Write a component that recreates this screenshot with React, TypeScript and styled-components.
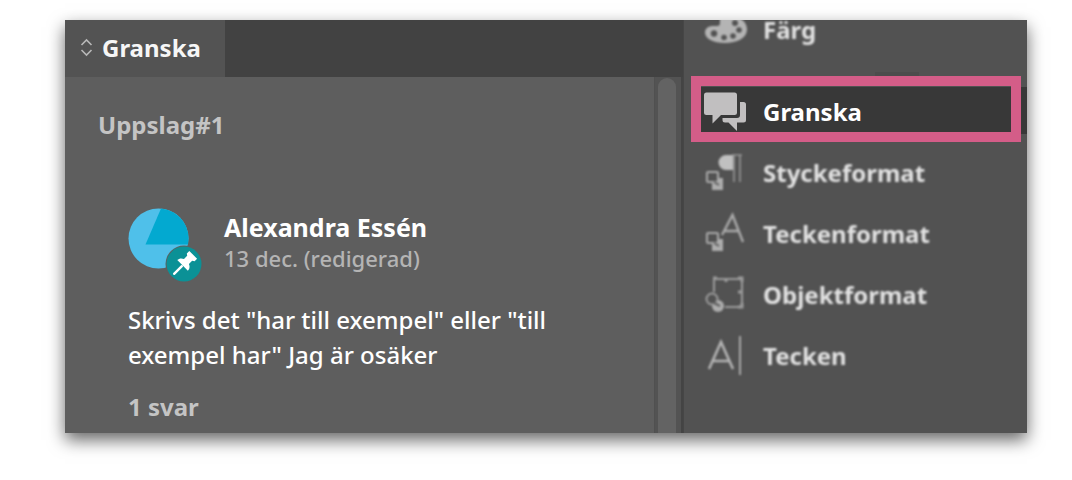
import React from "react";
import styled, { createGlobalStyle, css } from "styled-components";

const GlobalStyle = createGlobalStyle`
  * { box-sizing: border-box; }
  body {
    margin: 0;
    background: #fff;
    font-family: "Noto Sans", "Open Sans", sans-serif;
    font-size: 24px;
  }
`;

const Page = styled.main`
  padding: 20px 45px 47px 65px;
`;

const Workspace = styled.div`
  display: grid;
  grid-template-columns: minmax(0, 1fr) 344px;
  box-shadow: 0 7px 16px rgba(0, 0, 0, 0.6);
`;

const ReviewPanel = styled.section`
  display: flex;
  flex-direction: column;
  background: #5e5e5e;
`;

const TabBar = styled.div`
  display: flex;
  height: 57px;
  background: #424242;
`;

const Tab = styled.button`
  display: flex;
  align-items: center;
  gap: 9px;
  width: 160px;
  padding: 0 0 2px 15px;
  border: 0;
  background: #535353;
  color: #f6f6f6;
  font: inherit;
  font-weight: 700;
`;

const PanelBody = styled.div`
  display: flex;
  flex: 1;
`;

const Comments = styled.div`
  flex: 1;
  min-width: 0;
  padding: 33px 33px 11px;
`;

const ScrollTrack = styled.div`
  width: 29px;
  padding: 1px 5px 0 3px;
  border-left: 1px solid #505050;
  border-right: 2px solid #444;
  background: #535353;
`;

const ScrollThumb = styled.div`
  height: 100%;
  border-radius: 9px 9px 0 0;
  background: #636363;
`;

const SpreadTitle = styled.h2`
  margin: 0 0 68px;
  color: #c4c4c4;
  font-size: 24px;
  font-weight: 700;
  line-height: 30px;
`;

const Comment = styled.article`
  padding-left: 30px;
`;

const CommentHeader = styled.header`
  display: flex;
  gap: 21px;
  margin-bottom: 19px;
`;

const Author = styled.div`
  padding-top: 4px;
  line-height: 31px;
`;

const AuthorName = styled.div`
  color: #fff;
  font-size: 25px;
  font-weight: 700;
`;

const CommentDate = styled.div`
  color: #b4b4b4;
  font-size: 22px;
  font-weight: 500;
`;

const CommentText = styled.p`
  max-width: 460px;
  margin: 0 0 20px;
  color: #fff;
  font-weight: 500;
  line-height: 35px;
`;

const Replies = styled.button`
  display: block;
  padding: 0;
  border: 0;
  background: none;
  color: #c4c4c4;
  font: inherit;
  font-weight: 700;
  line-height: 30px;
`;

const Dock = styled.nav`
  overflow: hidden;
  border-left: 1px solid #464646;
  background: #525252;
`;

const DockList = styled.ul`
  margin: -21px 0 0;
  padding: 0;
  list-style: none;
`;

const DockDivider = styled.li`
  display: flex;
  align-items: flex-end;
  justify-content: center;
  height: 21px;
  padding: 0 0 5px 82px;

  &::before {
    content: "";
    width: 44px;
    height: 4px;
    background: #4c4c4c;
  }
`;

const DockButton = styled.button<{ $active?: boolean }>`
  position: relative;
  z-index: 0;
  display: flex;
  align-items: center;
  gap: 17px;
  width: 100%;
  height: 61px;
  padding: 0 0 0 20px;
  border: 0;
  background: none;
  color: #e2e2e2;
  font: inherit;
  font-weight: 700;
  line-height: 18px;
  text-align: left;

  ${({ $active }) =>
    $active
      ? css`
          color: #fff;
          &::before {
            content: "";
            position: absolute;
            inset: 6px 0 8px 7px;
            z-index: -1;
            background: #383838;
          }
          &::after {
            content: "";
            position: absolute;
            inset: -5px 6px 0 7px;
            border: 10px solid #d45d88;
          }
        `
      : css`
          & > * {
            filter: blur(1px);
          }
        `}
`;

const DockIcon = styled.svg`
  flex: none;
  width: 42px;
  height: 42px;
  overflow: visible;
`;

const AvatarArt = styled.svg`
  flex: none;
  width: 75px;
  height: 75px;
`;

const SortArrows = () => (
  <svg width="13" height="19" viewBox="0 0 13 19" fill="none" stroke="#b8b8b8" strokeWidth="1.6" aria-hidden="true">
    <path d="M1.5 7 6.5 2l5 5M1.5 12l5 5 5-5" />
  </svg>
);

const Avatar = () => (
  <AvatarArt viewBox="0 0 75 75" aria-hidden="true">
    <circle cx="30.5" cy="30.5" r="30" fill="#4fc0ea" />
    <path d="M17.5 36.5 33 .6A30 30 0 0 1 60 36.5Z" fill="#03a9d0" />
    <circle cx="56" cy="56" r="18.5" fill="#5e5e5e" />
    <circle cx="56" cy="56" r="17.5" fill="#0b9196" />
    <g transform="translate(56 56) rotate(45)" fill="#fff">
      <path d="M-5.500-13h11v3.500L3.500-8v4.500C6-2.500 7.500-.5 7.500 2h-15c0-2.500 1.500-4.500 4-5.500V-8l-2-1.500Z" />
      <rect x="-1.200" y="2" width="2.400" height="13" rx="1" />
    </g>
  </AvatarArt>
);

const PaletteIcon = () => (
  <DockIcon viewBox="0 0 42 42" fill="#b4b4b4" aria-hidden="true">
    <path d="M22 6c12 0 21 6 21 14.500S33 34 21 34 1 29.500 1 23.500c0-4.500 4-6.500 8-6.500 4.500 0 7 .5 7-3 0-4-1-8 6-8Z" />
    <g fill="#525252">
      <circle cx="31" cy="14" r="3" />
      <circle cx="35" cy="21" r="2.800" />
      <circle cx="29" cy="27" r="2.800" />
      <circle cx="20" cy="28.500" r="2.800" />
      <circle cx="10" cy="24.500" r="3.200" />
    </g>
  </DockIcon>
);

const ReviewIcon = () => (
  <DockIcon viewBox="0 0 42 42" fill="#c1bfc0" aria-hidden="true">
    <path d="M36 11h3.500a2.500 2.500 0 0 1 2.500 2.500V29a2.500 2.500 0 0 1-2.500 2.500H33V40l-8.500-8.500H21a2.500 2.500 0 0 1-2.500-2.500v-2H33a3 3 0 0 0 3-3Z" />
    <path d="M2.500 1.500h28A2.500 2.500 0 0 1 33 4v17.500a2.500 2.500 0 0 1-2.500 2.500H17l-8.500 8.500V24h-6A2.500 2.500 0 0 1 0 21.500V4a2.500 2.500 0 0 1 2.500-2.500Z" />
  </DockIcon>
);

const StyleBadge = () => (
  <>
    <path d="M8 26h11v12H8Z" fill="#adadad" stroke="none" />
    <rect x="3" y="20" width="11" height="10" rx="1" fill="#525252" />
    <path d="m10 30 5 3" stroke="#5c5c5c" strokeWidth="2" />
  </>
);

const ParagraphStyleIcon = () => (
  <DockIcon viewBox="0 0 42 42" fill="none" stroke="#aaa" strokeWidth="2" aria-hidden="true">
    <path d="M28 4h-6a6 6 0 0 0 0 13h6Z" fill="#c0c0c0" stroke="#c0c0c0" />
    <path d="M28 3h10M30 3v27M36 3v27" strokeWidth="1.600" stroke="#989898" />
    <StyleBadge />
  </DockIcon>
);

const CharacterStyleIcon = () => (
  <DockIcon viewBox="0 0 42 42" fill="none" stroke="#aaa" strokeWidth="2" aria-hidden="true">
    <path d="m18 22 10.500-20L39 29M21 18h14" strokeWidth="2.400" />
    <StyleBadge />
  </DockIcon>
);

const ObjectStyleIcon = () => (
  <DockIcon viewBox="0 0 42 42" fill="none" stroke="#9c9c9c" strokeWidth="2" aria-hidden="true">
    <path d="M10 18V5h28v28H21" />
    <path d="M9 4h4M22 4v4M34 4h4v4M38 18h-4M38 29v4h-4" strokeWidth="3" />
    <circle cx="14" cy="32" r="6" fill="#adadad" stroke="none" />
    <circle cx="8" cy="25" r="5.500" fill="#525252" />
    <path d="m10 29 6 3" stroke="#5c5c5c" />
  </DockIcon>
);

const CharacterIcon = () => (
  <DockIcon viewBox="0 0 42 42" fill="none" stroke="#b4b4b4" aria-hidden="true">
    <path d="M5 34 17 7l12 27M9 26h16" strokeWidth="2.600" />
    <path d="M36 1v39" strokeWidth="1.800" />
  </DockIcon>
);

const stylePanels = [
  { label: "Styckeformat", Icon: ParagraphStyleIcon },
  { label: "Teckenformat", Icon: CharacterStyleIcon },
  { label: "Objektformat", Icon: ObjectStyleIcon },
  { label: "Tecken", Icon: CharacterIcon },
];

export default function App() {
  return (
    <>
      <GlobalStyle />
      <Page>
        <Workspace>
          <ReviewPanel>
            <TabBar>
              <Tab type="button">
                <SortArrows />
                <span>Granska</span>
              </Tab>
            </TabBar>
            <PanelBody>
              <Comments>
                <SpreadTitle>Uppslag#1</SpreadTitle>
                <Comment>
                  <CommentHeader>
                    <Avatar />
                    <Author>
                      <AuthorName>Alexandra Essén</AuthorName>
                      <CommentDate>13 dec. (redigerad)</CommentDate>
                    </Author>
                  </CommentHeader>
                  <CommentText>
                    Skrivs det "har till exempel" eller "till exempel har" Jag är osäker
                  </CommentText>
                  <Replies type="button">1 svar</Replies>
                </Comment>
              </Comments>
              <ScrollTrack>
                <ScrollThumb />
              </ScrollTrack>
            </PanelBody>
          </ReviewPanel>
          <Dock>
            <DockList>
              <li>
                <DockButton type="button">
                  <PaletteIcon />
                  <span>Färg</span>
                </DockButton>
              </li>
              <DockDivider />
              <li>
                <DockButton type="button" $active>
                  <ReviewIcon />
                  <span>Granska</span>
                </DockButton>
              </li>
              {stylePanels.map(({ label, Icon }) => (
                <li key={label}>
                  <DockButton type="button">
                    <Icon />
                    <span>{label}</span>
                  </DockButton>
                </li>
              ))}
            </DockList>
          </Dock>
        </Workspace>
      </Page>
    </>
  );
}
